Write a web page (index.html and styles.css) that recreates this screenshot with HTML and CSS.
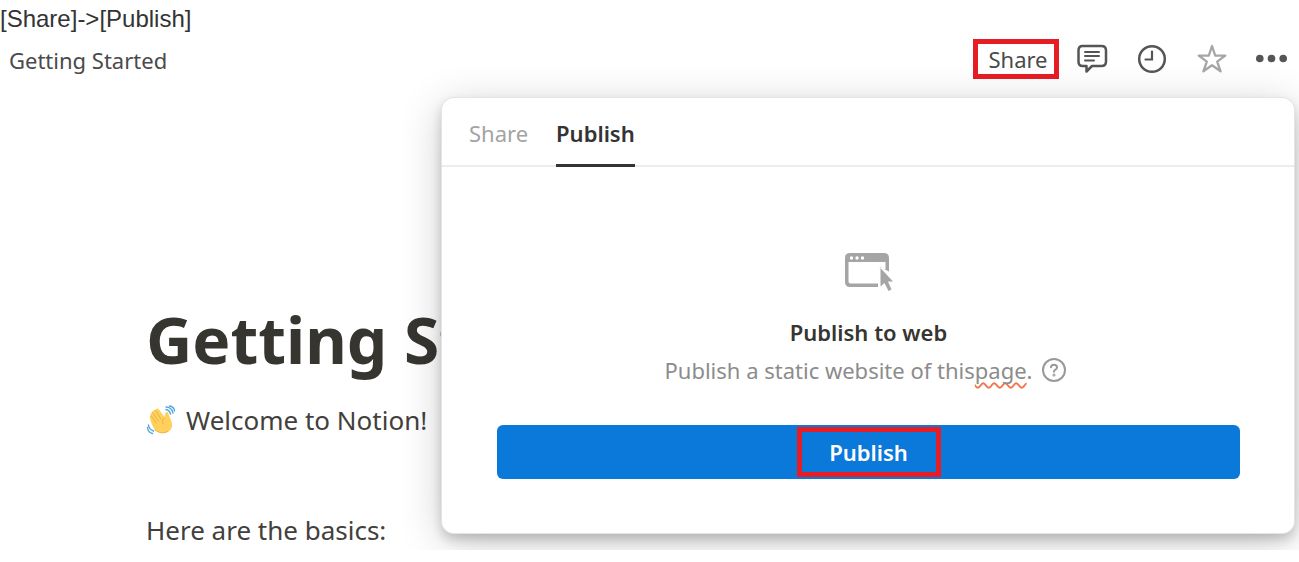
FILE: index.html
```html
<!DOCTYPE html>
<html lang="en">
<head>
<meta charset="utf-8">
<title>Getting Started</title>
<link rel="stylesheet" href="styles.css">
</head>
<body>
<p class="caption">[Share]-&gt;[Publish]</p>
<div class="window">
  <header class="topbar">
    <span class="crumb">Getting Started</span>
    <nav class="actions">
      <button class="share marked">Share</button>
      <button class="icon" aria-label="Comments">
        <svg width="32" height="32" viewBox="0 0 32 32" fill="none" stroke="#555" stroke-width="2.5" stroke-linejoin="round" stroke-linecap="round"><path d="M6.500 3H25.500Q30 3 30 7.500V18.500Q30 23 25.500 23H16L10.500 28.500V23H6.500Q2.500 23 2.500 18.500V7.500Q2.500 3 6.500 3Z"/><path stroke-width="2" d="M9 9H23M9 13H23M9 17.500H18"/></svg>
      </button>
      <button class="icon" aria-label="Updates">
        <svg width="32" height="32" viewBox="0 0 32 32" fill="none" stroke="#555" stroke-width="2.500" stroke-linecap="round"><circle cx="16" cy="16" r="12.800"/><path stroke-width="2.200" d="M16 8.500V16.500H9.500"/></svg>
      </button>
      <button class="icon" aria-label="Favorite">
        <svg width="32" height="32" viewBox="0 0 32 32" fill="none" stroke="#a6a6a6" stroke-width="2.300" stroke-linejoin="round"><path d="M16 3L19.200 12.600H29.300L21.200 18.600L24.600 28.300L16 22.300L7.400 28.300L10.800 18.600L2.700 12.600H12.800Z"/></svg>
      </button>
      <button class="icon" aria-label="More">
        <svg width="32" height="32" viewBox="0 0 32 32" fill="#555"><circle cx="3.800" cy="15.500" r="3.800"/><circle cx="15.500" cy="15.500" r="3.800"/><circle cx="27.200" cy="15.500" r="3.800"/></svg>
      </button>
    </nav>
  </header>
  <main class="page">
    <h1 class="title">Getting Started</h1>
    <p class="line welcome">
      <svg width="30" height="30" viewBox="0 0 30 30" fill="none" stroke-linecap="round" stroke-linejoin="round" aria-hidden="true">
        <path fill="#ffd15c" d="M4 13.500Q3 11 5 10.500Q4 7.500 6.500 7.200Q6.500 4.500 9.500 5Q11 2.500 13 4.500L18.500 12L19.200 8.500Q20 6 22 7.500Q22.800 10 24.500 14Q28.500 23 22.500 26.500Q15 30.500 9 25Q6 21 4 13.500Z"/>
        <path stroke="#e7a93b" stroke-width=".8" d="M5 10.500L10 18M6.500 7.500L12.500 16M9.500 5.500L15 14M18.500 13Q15 15 17 19M9 25Q15 30 22 26.500"/>
        <path stroke="#52a8dc" stroke-width="1.400" d="M20 4.500Q23.500 5 24.500 9M20 2Q25.500 2 27 8M23.500 1Q28 1.500 28.500 6M2.500 20Q3 24.500 7.500 26M1.500 22.500Q2 27.500 6.500 28.500"/>
      </svg>
      <span>Welcome to Notion!</span>
    </p>
    <p class="line">Here are the basics:</p>
  </main>
  <section class="popover">
    <div class="tabs" role="tablist">
      <button class="tab" role="tab" aria-selected="false">Share</button>
      <button class="tab active" role="tab" aria-selected="true">Publish</button>
    </div>
    <div class="panel">
      <svg class="hero" width="50" height="40" viewBox="0 0 50 40" aria-hidden="true">
        <path fill="#a5a5a5" fill-rule="evenodd" d="M6 1H40Q45 1 45 6V19.500L37 15.500Q34 15 34 18.500V35H6Q1 35 1 30V6Q1 1 6 1ZM4.500 10V29.500Q4.500 31.500 6.500 31.500H34V17Q35 14.500 38 16L41.500 18V10Z"/>
        <path fill="#fff" d="M34.500 15L47 27V40H34.500Z"/>
        <path fill="#a5a5a5" d="M36.500 16V34.500L40.500 31L44.500 39L47.500 37.500L44 29.500H49Z"/>
        <g fill="#fff"><circle cx="7.500" cy="6" r="1.700"/><circle cx="13" cy="6" r="1.700"/><circle cx="18.500" cy="6" r="1.700"/></g>
      </svg>
      <h2 class="heading">Publish to web</h2>
      <p class="note">
        <span>Publish a static website of this<span class="typo">page</span>.</span>
        <svg width="26" height="26" viewBox="0 0 26 26" fill="none" stroke="#999" stroke-width="2" stroke-linecap="round" aria-label="Help"><circle cx="13" cy="13" r="11"/><path d="M10 10.300Q10 7.700 13 7.700T16 10.300Q16 12 14.500 12.700T13 14.800"/><circle cx="13" cy="18" r=".5"/></svg>
      </p>
      <button class="publish"><span class="publish-label marked">Publish</span></button>
    </div>
  </section>
</div>
</body>
</html>
```
FILE: styles.css
```css
* { box-sizing: border-box; }
body {
  margin: 0;
  background: #fff;
  color: #373530;
  font-family: "Noto Sans", "Open Sans", sans-serif;
}
p, h1, h2 { margin: 0; }
button {
  font: inherit;
  color: inherit;
  background: none;
  border: 0;
  padding: 0;
  cursor: pointer;
}
svg { display: block; flex: none; }
.caption {
  font: 24px/38px "Liberation Sans", Arial, sans-serif;
  color: #333;
}
.window {
  position: relative;
  overflow: hidden;
  padding-bottom: 2px;
}
.topbar {
  display: flex;
  align-items: center;
  justify-content: space-between;
  height: 42px;
  padding: 0 11px 0 9px;
  font-size: 22px;
  color: #4a4a4a;
}
.crumb { padding-top: 2px; }
.actions { display: flex; align-items: center; gap: 28px; }
.marked { border: 5px solid #e71d25; }
.share {
  width: 86px;
  height: 40px;
  padding-left: 4px;
  margin-right: -11px;
  line-height: 30px;
}
.page { padding: 218px 24px 0 146px; }
.title {
  margin-bottom: 20px;
  font-size: 64px;
  line-height: 84px;
  font-weight: 700;
  color: #373530;
  white-space: nowrap;
}
.line { font-size: 26px; line-height: 36px; color: #42403c; white-space: nowrap; }
.welcome {
  display: flex;
  align-items: center;
  gap: 10px;
  margin-bottom: 74px;
}
.popover {
  position: absolute;
  top: 60px;
  left: 442px;
  right: 5px;
  background: #fff;
  border-radius: 12px;
  box-shadow: 0 0 0 1px #e4e4e4, 0 6px 12px rgba(0, 0, 0, .2), 0 8px 44px rgba(0, 0, 0, .2);
}
.tabs {
  display: flex;
  gap: 28px;
  height: 69px;
  padding: 0 27px;
  border-bottom: 2px solid #ececec;
  font-size: 22px;
}
.tab { height: 69px; padding-top: 4px; color: #a3a3a3; border-bottom: 3px solid transparent; }
.tab.active { color: #333; font-weight: 600; border-color: #333; }
.panel {
  display: flex;
  flex-direction: column;
  align-items: center;
  padding: 85px 54px 54px 55px;
}
.heading { margin-top: 21px; font-size: 22px; line-height: 38px; font-weight: 600; }
.note {
  display: flex;
  align-items: center;
  gap: 8px;
  margin-right: 6px;
  font-size: 22px;
  line-height: 38px;
  color: #8c8c8c;
}
.typo { text-decoration: underline wavy #f0764d 2px; text-decoration-skip-ink: none; text-underline-offset: 3px; }
.publish {
  display: flex;
  align-items: center;
  justify-content: center;
  width: 100%;
  height: 54px;
  margin-top: 36px;
  border-radius: 6px;
  background: #0a79d9;
  color: #fff;
  font-size: 22px;
  font-weight: 600;
}
.publish-label { width: 144px; line-height: 40px; }
```
